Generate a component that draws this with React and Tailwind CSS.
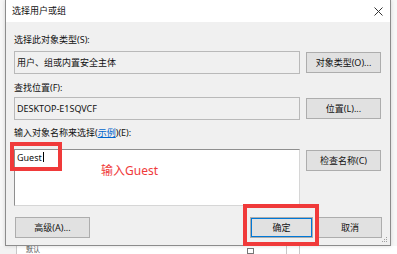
import React from "react";

const font = "font-['Noto_Sans','Noto_Sans_CJK_SC',sans-serif]";

function Btn({ children, className = "" }) {
  return (
    <div
      className={`flex h-[21px] items-center justify-center border border-[#adadad] bg-[#e1e1e1] text-[9px] leading-[12px] text-[#111] ${className}`}
    >
      {children}
    </div>
  );
}

function ReadBox({ children }) {
  return (
    <div className="flex h-[23px] w-[286px] items-center border border-[#b9b9b9] bg-[#f0f0f0] pl-[2px] text-[9px] leading-[12px] text-[#111]">
      {children}
    </div>
  );
}

export default function App() {
  return (
    <div className={`relative h-[254px] w-[397px] overflow-hidden bg-[#f7f7f7] ${font}`}>
      {/* dialog */}
      <div className="relative ml-[5px] flex h-[246px] w-[386px] flex-col border-x border-b border-[#8c8c8c] bg-[#f0f0f0] shadow-[0_0_4px_rgba(0,0,0,0.15)]">
        {/* title bar */}
        <div className="flex h-[22px] items-center justify-between bg-white pl-[6px] pr-[6px]">
          <span className="text-[9px] leading-[12px] text-[#111]">选择用户或组</span>
          <svg width="9" height="9" viewBox="0 0 9 9" className="mr-[1px]">
            <path d="M0.5 0.5 L8.5 8.5 M8.5 0.5 L0.5 8.5" stroke="#333" strokeWidth="1" />
          </svg>
        </div>

        {/* body */}
        <div className="flex flex-1 flex-col pl-[8px] pr-[8px]">
          <div className="mt-[12px] text-[9px] leading-[12px] text-[#111]">选择此对象类型(S):</div>
          <div className="mt-[5px] flex items-start gap-[6px]">
            <ReadBox>用户、组或内置安全主体</ReadBox>
            <Btn className="mt-[1px] w-[75px]">对象类型(O)...</Btn>
          </div>

          <div className="mt-[8px] text-[9px] leading-[12px] text-[#111]">查找位置(F):</div>
          <div className="mt-[3px] flex items-start gap-[6px]">
            <ReadBox>DESKTOP-E1SQVCF</ReadBox>
            <Btn className="mt-[1px] w-[75px]">位置(L)...</Btn>
          </div>

          <div className="mt-[7px] text-[9px] leading-[12px] text-[#111]">
            输入对象名称来选择(<span className="text-[#0066cc] underline">示例</span>)(E):
          </div>
          <div className="mt-[10px] flex items-start gap-[6px]">
            <div className="relative h-[57px] w-[286px] border border-[#8f8f8f] border-b-[#d6d6d6] border-r-[#d6d6d6] bg-white pl-[2px] pt-[1px] text-[9px] leading-[12px] text-[#111]">
              <span>Guest</span>
              <span className="ml-[1px] inline-block h-[10px] w-px translate-y-[1px] bg-black" />
              <span className="absolute left-[86px] top-[13px] text-[12px] leading-[16px] text-[#f03a3a]">输入Guest</span>
            </div>
            <Btn className="mt-[1px] w-[75px]">检查名称(C)</Btn>
          </div>

          <div className="mt-[11px] flex items-start">
            <Btn className="ml-[1px] w-[75px]">高级(A)...</Btn>
            <Btn className="ml-auto w-[63px] border-[#0078d7] shadow-[inset_0_0_0_1px_#0078d7]">确定</Btn>
            <Btn className="ml-[5px] w-[64px]">取消</Btn>
          </div>
        </div>

        {/* resize grip */}
        <svg width="6" height="6" viewBox="0 0 6 6" className="absolute bottom-[2px] right-[2px]">
          <rect x="4" y="0" width="1" height="1" fill="#a0a0a0" />
          <rect x="2" y="2" width="1" height="1" fill="#a0a0a0" />
          <rect x="4" y="2" width="1" height="1" fill="#a0a0a0" />
          <rect x="0" y="4" width="1" height="1" fill="#a0a0a0" />
          <rect x="2" y="4" width="1" height="1" fill="#a0a0a0" />
          <rect x="4" y="4" width="1" height="1" fill="#a0a0a0" />
        </svg>

        {/* annotations */}
        <div className="pointer-events-none absolute left-[4px] top-[142px] h-[29px] w-[52px] border-[4px] border-[#f03a3a]" />
        <div className="pointer-events-none absolute left-[237px] top-[204px] h-[42px] w-[76px] border-[4px] border-[#f03a3a]" />
      </div>

      {/* window behind the dialog */}
      <div className="flex h-[8px] w-full bg-white">
        <div className="w-[17px] border-r border-[#c8c8c8] bg-[#f3f3f3]" />
        <div className="w-[230px] pl-[9px] text-[7px] leading-[8px] text-[#555]">默认</div>
        <div className="mt-[2px] h-[6px] w-[7px] border border-[#777]" />
        <div className="ml-[32px] w-px bg-[#c8c8c8]" />
        <div className="ml-[12px] w-px bg-[#c8c8c8]" />
      </div>
    </div>
  );
}
